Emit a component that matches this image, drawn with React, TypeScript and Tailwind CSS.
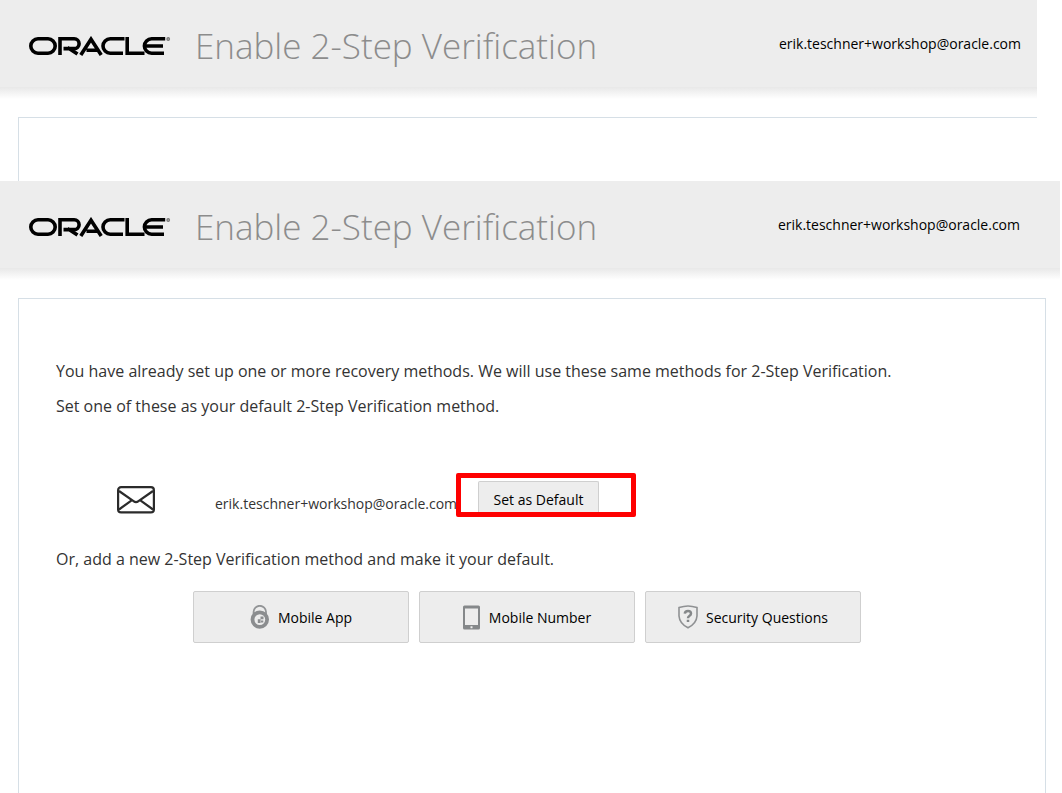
import React from 'react';

const EMAIL = 'erik.teschner+workshop@oracle.com';

function OracleLogo() {
  return (
    <svg viewBox="0 0 142 20" className="h-5 w-[142px] shrink-0" fill="none" stroke="#000" strokeWidth="3.6" role="img" aria-label="Oracle">
      <rect x="1.8" y="2.8" width="24.4" height="14.4" rx="7.2" />
      <path d="M31 19V2.8H45.2a4.9 4.9 0 0 1 0 9.8H34.5M38.5 11.5L48.5 18" />
      <path d="M51.8 19L62 3.2L72.2 19M57.5 14.2H68.5" />
      <path d="M95.5 2.8H81.2a7.2 7.2 0 0 0 0 14.4H94" />
      <path d="M98.2 1V17.2H115.5" />
      <path d="M136.2 2.8H122.6a7.2 7.2 0 0 0 0 14.4H135M116.5 10H134" />
      <circle cx="139.2" cy="3" r="1.2" stroke="#777" strokeWidth="1.4" />
    </svg>
  );
}

function Banner({ className }: { className: string }) {
  return (
    <div className={className}>
      <header className="flex h-[87px] items-center justify-between bg-[#ededed] pl-[29px]">
        <div className="flex items-center gap-6 pt-1">
          <OracleLogo />
          <h1 className="text-[35px] leading-[50px] font-light whitespace-nowrap text-[#8c8c8c]">Enable 2-Step Verification</h1>
        </div>
        <span className="text-sm text-black">{EMAIL}</span>
      </header>
      <div className="h-3 bg-linear-to-b from-[#e8e8e8] to-white" />
    </div>
  );
}

function MailIcon() {
  return (
    <svg viewBox="0 0 38 28" className="h-7 w-[38px] shrink-0" fill="none" stroke="#2b2b2b" strokeWidth="2.2" aria-hidden="true">
      <rect x="1.1" y="1.2" width="35.8" height="25.2" rx="3" />
      <path d="M2 5L16.500 15.200Q19 17.200 21.500 15.200L36 5M2 23.500L15 14.200M36 23.500L23 14.200" />
    </svg>
  );
}

function LockIcon() {
  return (
    <svg viewBox="0 0 20 24" className="h-6 w-5 shrink-0" fill="none" aria-hidden="true">
      <path d="M3.6 9V6.8a6.2 6 0 0 1 12.4 0V9" stroke="#929496" strokeWidth="1.8" />
      <circle cx="9.8" cy="14.6" r="7.3" stroke="#8b8d8f" strokeWidth="3.8" />
      <path d="M10.500 11.400h3v2.800h-3zM7.800 14.300h2.800v3.600H7.800zM11 15.400h2.300v2H11z" fill="#8b8d8f" />
    </svg>
  );
}

function TabletIcon() {
  return (
    <svg viewBox="0 0 18 25" className="h-[25px] w-[18px] shrink-0" aria-hidden="true">
      <path fillRule="evenodd" fill="#85888a" d="M1.5.5h14q1.5 0 1.5 1.5v21q0 1.5-1.5 1.5h-14Q0 24.500 0 23V2Q0 .5 1.500.5zM2 3.500v16.500h13V3.500zM7.500 21.200v2h2v-2z" />
    </svg>
  );
}

function ShieldIcon() {
  return (
    <svg viewBox="0 0 20 24" className="h-6 w-5 shrink-0" fill="none" aria-hidden="true">
      <path d="M1 2.600Q6 1 10 1T19 2.600V11Q18.500 18.500 10 22.800Q1.500 18.500 1 11Z" stroke="#8f9193" strokeWidth="1.6" />
      <path d="M6.800 8.700Q7 6 10 6T13 8.600Q13 10 11.300 11Q10 11.800 10 13.200M10 14.800v2.200" stroke="#85888a" strokeWidth="2.500" />
    </svg>
  );
}

function MethodButton({ icon, label }: { icon: React.ReactNode; label: string }) {
  return (
    <button type="button" className="flex h-[52px] w-[216px] items-center justify-center gap-2 rounded-xs border border-[#cfcfcf] bg-[#ededed] text-sm text-black">
      {icon}
      <span className="pt-0.5">{label}</span>
    </button>
  );
}

export default function App() {
  return (
    <div className="flex min-h-screen flex-col bg-white font-['Open_Sans',sans-serif] text-[#333]">
      <section className="mr-[25px]">
        <Banner className="[&>header]:pr-4" />
        <div className="mt-[18px] ml-[18px] h-16 border-t border-l border-[#d6dfe6]" />
      </section>

      <Banner className="mr-0.5 [&>header]:pr-10" />
      <main className="mt-[18px] mr-4 ml-[18px] flex-1 border border-b-0 border-[#d6dfe6] pt-[60px] pr-9 pl-[37px]">
        <p className="text-base leading-6">You have already set up one or more recovery methods. We will use these same methods for 2-Step Verification.</p>
        <p className="mt-[11px] text-base leading-6">Set one of these as your default 2-Step Verification method.</p>

        <div className="mt-[55px] flex h-11 items-center pl-[61px]">
          <div className="pt-2.5"><MailIcon /></div>
          <span className="ml-[60px] w-[241px] pt-[18px] text-sm whitespace-nowrap">{EMAIL}</span>
          <div className="flex h-11 w-[180px] items-end rounded-xs border-[5px] border-[#fe0000] pl-[17px]">
            <button type="button" className="h-[31px] w-[121px] rounded-t-xs border border-b-0 border-[#cfcfcf] bg-[#ededed] pt-1.5 text-sm text-black">Set as Default</button>
          </div>
        </div>

        <p className="mt-[30px] text-base leading-6">Or, add a new 2-Step Verification method and make it your default.</p>
        <div className="mt-5 flex flex-wrap gap-2.5 pl-[137px]">
          <MethodButton icon={<LockIcon />} label="Mobile App" />
          <MethodButton icon={<TabletIcon />} label="Mobile Number" />
          <MethodButton icon={<ShieldIcon />} label="Security Questions" />
        </div>
      </main>
    </div>
  );
}
